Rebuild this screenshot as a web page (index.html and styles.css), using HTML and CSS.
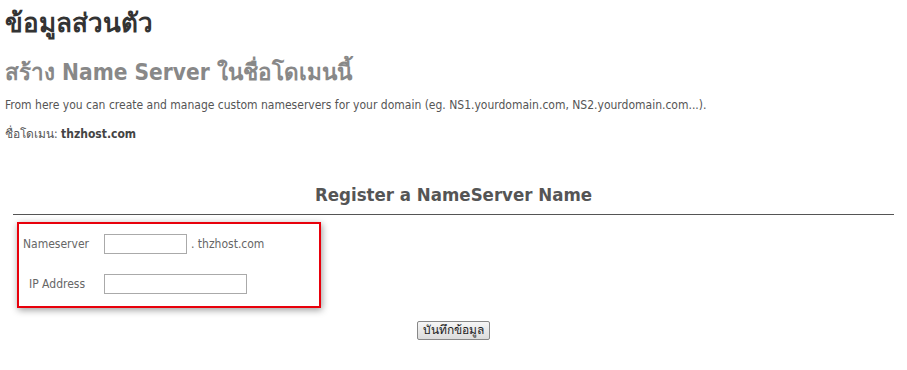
FILE: index.html
```html
<!DOCTYPE html>
<html lang="th">

<head>
  <meta charset="UTF-8">
  <title>ข้อมูลส่วนตัว</title>
  <link rel="stylesheet" href="styles.css">
</head>

<body>
  <h1>ข้อมูลส่วนตัว</h1>
  <h2>สร้าง Name Server ในชื่อโดเมนนี้</h2>
  <p class="intro">From here you can create and manage custom nameservers for your domain (eg. NS1.yourdomain.com, NS2.yourdomain.com...).</p>
  <p class="domain">ชื่อโดเมน: <strong>thzhost.com</strong></p>

  <div class="register">
    <h3>Register a NameServer Name</h3>
    <div class="form-box">
      <div class="row">
        <label for="ns">Nameserver</label>
        <input id="ns" class="short" type="text">
        <span class="suffix">. thzhost.com</span>
      </div>
      <div class="row">
        <label for="ip" class="indent">IP Address</label>
        <input id="ip" class="long" type="text">
      </div>
    </div>
    <div class="actions">
      <button type="submit">บันทึกข้อมูล</button>
    </div>
  </div>
</body>

</html>
```

FILE: styles.css
```css
* {
  box-sizing: border-box
}

body {
  margin: 0;
  padding: 0 5px;
  background: #fff;
  color: #555;
  font-family: "DejaVu Sans Condensed", "DejaVu Sans", "Noto Sans", sans-serif;
  font-size: 12px
}

h1 {
  margin: 6px 0 0;
  font-size: 26px;
  line-height: 34px;
  color: #333
}

h2 {
  margin: 17px 0 0;
  font-size: 22.5px;
  line-height: 30px;
  color: #888
}

.intro {
  margin: 10px 0 0;
  line-height: 16px
}

.domain {
  margin: 13px 0 0;
  line-height: 16px
}

.domain strong {
  color: #444
}

.register {
  margin: 41px 8px 0
}

h3 {
  margin: 0;
  padding-bottom: 7px;
  border-bottom: 1px solid #555;
  text-align: center;
  font-size: 18.5px;
  line-height: 24px;
  color: #555
}

.form-box {
  width: 304px;
  margin: 7px 0 0 4px;
  padding: 10px 0 12px 4px;
  border: 2px solid #e8000b;
  box-shadow: 1px 2px 7px rgba(0, 0, 0, .4);
  display: flex;
  flex-direction: column;
  gap: 20px
}

.row {
  display: flex;
  align-items: center;
  height: 20px
}

.row label {
  width: 81px;
  color: #666
}

.row label.indent {
  padding-left: 6px
}

input {
  height: 20px;
  border: 1px solid #aaa;
  padding: 1px 3px;
  font: inherit
}

input.short {
  width: 83px
}

input.long {
  width: 143px
}

.suffix {
  margin-left: 4px;
  color: #666
}

.actions {
  display: flex;
  justify-content: center;
  margin-top: 13px
}

button {
  font: inherit;
  font-size: 12px;
  line-height: 15px;
  color: #222;
  padding: 1px 5px;
  height: 19px;
  border: 1px solid #888;
  border-radius: 2px;
  background: linear-gradient(#f6f6f6, #dcdcdc)
}
```
